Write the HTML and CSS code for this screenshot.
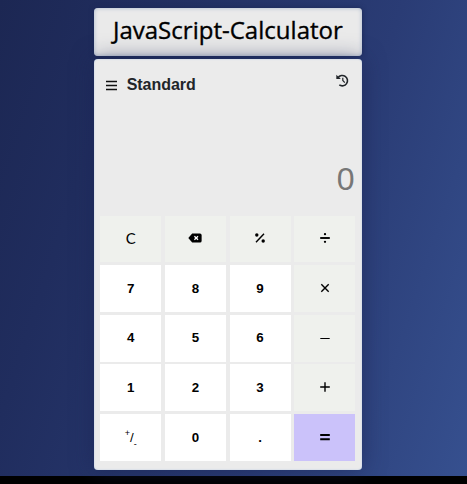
FILE: index.html
```html
<!DOCTYPE html>
<html lang="en">
<head>
<meta charset="utf-8">
<title>JavaScript-Calculator</title>
<link rel="stylesheet" href="styles.css">
</head>
<body>
<main class="page">
  <h1 class="title"><span class="title-text">JavaScript-Calculator</span></h1>
  <section class="calculator">
    <header class="toolbar">
      <svg class="menu" viewBox="0 0 11 11"><path d="M0 1.5H11M0 5.5H11M0 9.5H11"/></svg>
      <h2 class="mode">Standard</h2>
      <svg class="history" viewBox="0 0 13 13"><path d="M2 3.7A5.2 5.2 0 1 1 3.3 10.9"/><path class="arrow" d="M.3 .8V5.1H4.8Z"/><path class="hand" d="M6.8 3.8V6.5L8.8 8.6"/></svg>
    </header>
    <output class="display">0</output>
    <div class="keys">
      <button class="key tool clear">C</button>
      <button class="key tool"><svg class="backspace" viewBox="0 0 14 10"><path d="M4.2 .5H12A1.6 1.6 0 0 1 13.6 2.1V7.9A1.6 1.6 0 0 1 12 9.5H4.2L.3 5Z"/><path class="cross" d="M6.4 3.2L10 6.8M10 3.2L6.4 6.8"/></svg></button>
      <button class="key tool"><svg class="sign" viewBox="0 0 10 10"><path class="thin" d="M1 9.3L9 .8"/><circle cx="1.8" cy="2" r="1.7"/><circle cx="8.2" cy="8" r="1.7"/></svg></button>
      <button class="key tool"><svg class="sign" viewBox="0 0 10 10"><path d="M.2 5H9.8"/><circle cx="5" cy="1.2" r="1.15"/><circle cx="5" cy="8.8" r="1.15"/></svg></button>
      <button class="key digit">7</button>
      <button class="key digit">8</button>
      <button class="key digit">9</button>
      <button class="key tool"><svg class="sign" viewBox="0 0 10 10"><path class="thin" d="M1.3 1.3L8.7 8.7M8.7 1.3L1.3 8.7"/></svg></button>
      <button class="key">4</button>
      <button class="key">5</button>
      <button class="key">6</button>
      <button class="key tool"><svg class="sign" viewBox="0 0 10 10"><path class="hair" d="M.3 5.5H9.7"/></svg></button>
      <button class="key digit">1</button>
      <button class="key digit">2</button>
      <button class="key digit">3</button>
      <button class="key tool"><svg class="sign" viewBox="0 0 10 10"><path class="thin" d="M.2 5H9.8M5 .2V9.8"/></svg></button>
      <button class="key digit negate"><sup>+</sup>/<sub>-</sub></button>
      <button class="key digit">0</button>
      <button class="key digit">.</button>
      <button class="key equals"><svg class="sign" viewBox="0 0 10 10"><path d="M.2 3H9.8M.2 7.2H9.8"/></svg></button>
    </div>
  </section>
</main>
</body>
</html>
```
FILE: styles.css
```css
* { box-sizing: border-box; }
html { background: #000; }
body {
  margin: 0;
  height: 484px;
  overflow: hidden;
  background: #000;
  font-family: "Liberation Sans", Arial, sans-serif;
}
.page {
  height: 476px;
  padding: 8px 105.4px 0 94.2px;
  background: linear-gradient(108deg, #1c2753 0%, #202d5e 22%, #2a3c75 65%, #36508f 100%);
}
.title {
  display: flex;
  justify-content: center;
  height: 47.5px;
  margin: 0 0 3.5px;
  border-radius: 4px;
  background: #eaeaea;
  box-shadow: inset 0 0 4px #a9b6cc, 0 0 5px #1c2855;
  font: 500 24px/44px "Open Sans", "Noto Sans", sans-serif;
  color: #000;
}
.title-text {
  letter-spacing: .02px;
  white-space: nowrap;
  -webkit-text-stroke: .35px #000;
}
.calculator {
  height: 411px;
  padding: 0 6px;
  border-radius: 4px;
  background: #ebebeb;
  box-shadow: inset 0 0 2px #b5c9e5, 0 0 22px rgba(25, 34, 80, .55);
}
.toolbar {
  display: flex;
  align-items: flex-start;
  height: 100px;
  padding: 15px 6px 0;
}
.menu { width: 11px; height: 11px; margin-top: 6px; }
.mode {
  margin: 0 auto 0 9.5px;
  font-size: 16px;
  line-height: 21px;
  letter-spacing: -.05px;
  color: #212529;
}
.history { width: 13px; height: 13px; margin-right: 1px; }
svg { display: block; fill: none; stroke: #111; stroke-width: 1.7; }
.history { stroke: #212529; stroke-width: 1.6; }
.arrow { fill: #212529; stroke: none; }
.hand { stroke-width: 1.2; }
.display {
  display: block;
  height: 57px;
  padding-right: 1px;
  font: 32px/41px "Liberation Sans", Arial, sans-serif;
  text-align: right;
  color: #777;
}
.keys {
  display: grid;
  grid-template-columns: repeat(4, 61px);
  grid-template-rows: 46px 47.5px 46.5px 47px 47px;
  column-gap: 3.7px;
  row-gap: 2.8px;
}
.key {
  display: flex;
  align-items: center;
  justify-content: center;
  padding: 0 0 1.5px;
  border: 0;
  border-radius: 0;
  background: #fff;
  font: bold 13.33px/16px "Liberation Sans", Arial, sans-serif;
  color: #000;
}
.digit { padding-bottom: 0; }
.tool { background: #eff1ed; }
.clear { font: 15px/16px Lato, "Liberation Sans", sans-serif; }
.equals { background: #cbc2fa; }
.backspace { width: 14px; height: 10px; fill: #000; stroke: none; }
.cross { stroke: #fff; stroke-width: 1.3; }
.sign { width: 10px; height: 10px; stroke: #000; stroke-width: 1.9; }
.sign circle { fill: #000; stroke: none; }
.thin { stroke-width: 1.4; }
.hair { stroke-width: 1; }
.negate { font-weight: 400; }
.negate sup, .negate sub { font-size: 9px; line-height: 0; }
.negate sup { align-self: flex-start; margin-top: 19px; }
.negate sub { align-self: flex-end; margin-bottom: 17px; }
```
